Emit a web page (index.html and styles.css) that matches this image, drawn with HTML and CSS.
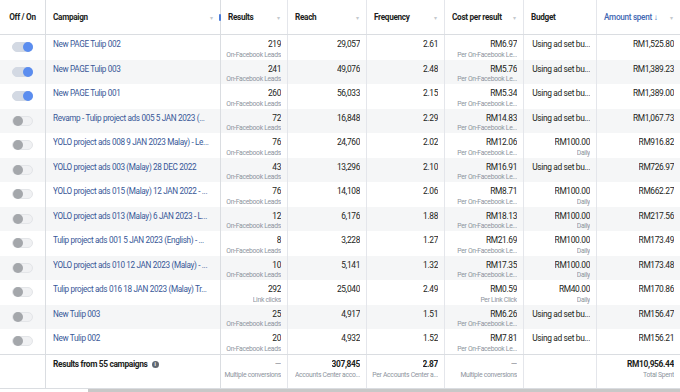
FILE: index.html
```html
<!DOCTYPE html>
<html>
<head>
<meta charset="utf-8">
<link rel="stylesheet" href="styles.css">
</head>
<body>
<div class="table">
  <div class="row head">
    <div class="cell c-toggle"><span class="htext">Off / On</span></div>
    <div class="cell c-name"><span class="htext">Campaign</span><span class="caret">▾</span><span class="handle"></span></div>
    <div class="cell frozen"><span class="htext">Results</span><span class="caret">▾</span></div>
    <div class="cell"><span class="htext">Reach</span><span class="caret">▾</span></div>
    <div class="cell"><span class="htext">Frequency</span><span class="caret">▾</span></div>
    <div class="cell"><span class="htext">Cost per result</span><span class="caret">▾</span></div>
    <div class="cell"><span class="htext">Budget</span></div>
    <div class="cell"><span class="htext blue">Amount spent ↓</span><span class="caret">▾</span></div>
  </div>

  <div class="row">
    <div class="cell c-toggle"><span class="tog on"></span></div>
    <div class="cell c-name"><a class="link">New PAGE Tulip 002</a></div>
    <div class="cell num frozen"><span class="v">219</span><span class="s">On-Facebook Leads</span></div>
    <div class="cell num"><span class="v">29,057</span></div>
    <div class="cell num"><span class="v">2.61</span></div>
    <div class="cell num"><span class="v">RM6.97</span><span class="s">Per On-Facebook Le...</span></div>
    <div class="cell num"><span class="v">Using ad set bu...</span></div>
    <div class="cell num"><span class="v">RM1,525.80</span></div>
  </div>
  <div class="row">
    <div class="cell c-toggle"><span class="tog on"></span></div>
    <div class="cell c-name"><a class="link">New PAGE Tulip 003</a></div>
    <div class="cell num frozen"><span class="v">241</span><span class="s">On-Facebook Leads</span></div>
    <div class="cell num"><span class="v">49,076</span></div>
    <div class="cell num"><span class="v">2.48</span></div>
    <div class="cell num"><span class="v">RM5.76</span><span class="s">Per On-Facebook Le...</span></div>
    <div class="cell num"><span class="v">Using ad set bu...</span></div>
    <div class="cell num"><span class="v">RM1,389.23</span></div>
  </div>
  <div class="row">
    <div class="cell c-toggle"><span class="tog on"></span></div>
    <div class="cell c-name"><a class="link">New PAGE Tulip 001</a></div>
    <div class="cell num frozen"><span class="v">260</span><span class="s">On-Facebook Leads</span></div>
    <div class="cell num"><span class="v">56,033</span></div>
    <div class="cell num"><span class="v">2.15</span></div>
    <div class="cell num"><span class="v">RM5.34</span><span class="s">Per On-Facebook Le...</span></div>
    <div class="cell num"><span class="v">Using ad set bu...</span></div>
    <div class="cell num"><span class="v">RM1,389.00</span></div>
  </div>
  <div class="row">
    <div class="cell c-toggle"><span class="tog"></span></div>
    <div class="cell c-name"><a class="link">Revamp - Tulip project ads 005 5 JAN 2023 (...</a></div>
    <div class="cell num frozen"><span class="v">72</span><span class="s">On-Facebook Leads</span></div>
    <div class="cell num"><span class="v">16,848</span></div>
    <div class="cell num"><span class="v">2.29</span></div>
    <div class="cell num"><span class="v">RM14.83</span><span class="s">Per On-Facebook Le...</span></div>
    <div class="cell num"><span class="v">Using ad set bu...</span></div>
    <div class="cell num"><span class="v">RM1,067.73</span></div>
  </div>
  <div class="row">
    <div class="cell c-toggle"><span class="tog"></span></div>
    <div class="cell c-name"><a class="link">YOLO project ads 008 9 JAN 2023 Malay) - Le...</a></div>
    <div class="cell num frozen"><span class="v">76</span><span class="s">On-Facebook Leads</span></div>
    <div class="cell num"><span class="v">24,760</span></div>
    <div class="cell num"><span class="v">2.02</span></div>
    <div class="cell num"><span class="v">RM12.06</span><span class="s">Per On-Facebook Le...</span></div>
    <div class="cell num"><span class="v">RM100.00</span><span class="s">Daily</span></div>
    <div class="cell num"><span class="v">RM916.82</span></div>
  </div>
  <div class="row">
    <div class="cell c-toggle"><span class="tog"></span></div>
    <div class="cell c-name"><a class="link">YOLO project ads 003 (Malay) 28 DEC 2022</a></div>
    <div class="cell num frozen"><span class="v">43</span><span class="s">On-Facebook Leads</span></div>
    <div class="cell num"><span class="v">13,296</span></div>
    <div class="cell num"><span class="v">2.10</span></div>
    <div class="cell num"><span class="v">RM16.91</span><span class="s">Per On-Facebook Le...</span></div>
    <div class="cell num"><span class="v">Using ad set bu...</span></div>
    <div class="cell num"><span class="v">RM726.97</span></div>
  </div>
  <div class="row">
    <div class="cell c-toggle"><span class="tog"></span></div>
    <div class="cell c-name"><a class="link">YOLO project ads 015 (Malay) 12 JAN 2022 - ...</a></div>
    <div class="cell num frozen"><span class="v">76</span><span class="s">On-Facebook Leads</span></div>
    <div class="cell num"><span class="v">14,108</span></div>
    <div class="cell num"><span class="v">2.06</span></div>
    <div class="cell num"><span class="v">RM8.71</span><span class="s">Per On-Facebook Le...</span></div>
    <div class="cell num"><span class="v">RM100.00</span><span class="s">Daily</span></div>
    <div class="cell num"><span class="v">RM662.27</span></div>
  </div>
  <div class="row">
    <div class="cell c-toggle"><span class="tog"></span></div>
    <div class="cell c-name"><a class="link">YOLO project ads 013 (Malay) 6 JAN 2023 - L...</a></div>
    <div class="cell num frozen"><span class="v">12</span><span class="s">On-Facebook Leads</span></div>
    <div class="cell num"><span class="v">6,176</span></div>
    <div class="cell num"><span class="v">1.88</span></div>
    <div class="cell num"><span class="v">RM18.13</span><span class="s">Per On-Facebook Le...</span></div>
    <div class="cell num"><span class="v">RM100.00</span><span class="s">Daily</span></div>
    <div class="cell num"><span class="v">RM217.56</span></div>
  </div>
  <div class="row">
    <div class="cell c-toggle"><span class="tog"></span></div>
    <div class="cell c-name"><a class="link">Tulip project ads 001 5 JAN 2023 (English) - ...</a></div>
    <div class="cell num frozen"><span class="v">8</span><span class="s">On-Facebook Leads</span></div>
    <div class="cell num"><span class="v">3,228</span></div>
    <div class="cell num"><span class="v">1.27</span></div>
    <div class="cell num"><span class="v">RM21.69</span><span class="s">Per On-Facebook Le...</span></div>
    <div class="cell num"><span class="v">RM100.00</span><span class="s">Daily</span></div>
    <div class="cell num"><span class="v">RM173.49</span></div>
  </div>
  <div class="row">
    <div class="cell c-toggle"><span class="tog"></span></div>
    <div class="cell c-name"><a class="link">YOLO project ads 010 12 JAN 2023 (Malay) - ...</a></div>
    <div class="cell num frozen"><span class="v">10</span><span class="s">On-Facebook Leads</span></div>
    <div class="cell num"><span class="v">5,141</span></div>
    <div class="cell num"><span class="v">1.32</span></div>
    <div class="cell num"><span class="v">RM17.35</span><span class="s">Per On-Facebook Le...</span></div>
    <div class="cell num"><span class="v">RM100.00</span><span class="s">Daily</span></div>
    <div class="cell num"><span class="v">RM173.48</span></div>
  </div>
  <div class="row">
    <div class="cell c-toggle"><span class="tog"></span></div>
    <div class="cell c-name"><a class="link">Tulip project ads 016 18 JAN 2023 (Malay) Tr...</a></div>
    <div class="cell num frozen"><span class="v">292</span><span class="s">Link clicks</span></div>
    <div class="cell num"><span class="v">25,040</span></div>
    <div class="cell num"><span class="v">2.49</span></div>
    <div class="cell num"><span class="v">RM0.59</span><span class="s">Per Link Click</span></div>
    <div class="cell num"><span class="v">RM40.00</span><span class="s">Daily</span></div>
    <div class="cell num"><span class="v">RM170.86</span></div>
  </div>
  <div class="row">
    <div class="cell c-toggle"><span class="tog"></span></div>
    <div class="cell c-name"><a class="link">New Tulip 003</a></div>
    <div class="cell num frozen"><span class="v">25</span><span class="s">On-Facebook Leads</span></div>
    <div class="cell num"><span class="v">4,917</span></div>
    <div class="cell num"><span class="v">1.51</span></div>
    <div class="cell num"><span class="v">RM6.26</span><span class="s">Per On-Facebook Le...</span></div>
    <div class="cell num"><span class="v">Using ad set bu...</span></div>
    <div class="cell num"><span class="v">RM156.47</span></div>
  </div>
  <div class="row">
    <div class="cell c-toggle"><span class="tog"></span></div>
    <div class="cell c-name"><a class="link">New Tulip 002</a></div>
    <div class="cell num frozen"><span class="v">20</span><span class="s">On-Facebook Leads</span></div>
    <div class="cell num"><span class="v">4,932</span></div>
    <div class="cell num"><span class="v">1.52</span></div>
    <div class="cell num"><span class="v">RM7.81</span><span class="s">Per On-Facebook Le...</span></div>
    <div class="cell num"><span class="v">Using ad set bu...</span></div>
    <div class="cell num"><span class="v">RM156.21</span></div>
  </div>

  <div class="row foot">
    <div class="cell c-toggle"></div>
    <div class="cell c-name"><span class="bold">Results from 55 campaigns</span><span class="info">i</span></div>
    <div class="cell num frozen"><span class="v dash">—</span><span class="s">Multiple conversions</span></div>
    <div class="cell num"><span class="v bold">307,845</span><span class="s">Accounts Center acco...</span></div>
    <div class="cell num"><span class="v bold">2.87</span><span class="s">Per Accounts Center a...</span></div>
    <div class="cell num"><span class="v dash">—</span><span class="s">Multiple conversions</span></div>
    <div class="cell num"></div>
    <div class="cell num"><span class="v bold">RM10,956.44</span><span class="s">Total Spent</span></div>
  </div>
  <div class="scroll"><div class="thumb"></div></div>
</div>
</body>
</html>
```

FILE: styles.css
```css
* { box-sizing: border-box; }
html, body { margin: 0; padding: 0; background: #fff; }
body {
  width: 680px;
  height: 392px;
  overflow: hidden;
  font-family: Roboto, "Liberation Sans", Arial, sans-serif;
  color: #1c1e21;
  font-size: 8.4px;
  letter-spacing: -0.35px;
}
.table { width: 680px; }
.row {
  display: grid;
  grid-template-columns: 46px 174px 68px 79px 78px 79px 73px 83px;
  height: 24.5px;
}
.row:nth-child(odd) { background: #f5f6f7; }
.row.head {
  height: 35px;
  background: #fff;
  border-bottom: 1px solid #dadde1;
}
.row.foot {
  height: 35px;
  background: #fff;
  border-top: 1px solid #dadde1;
  border-bottom: 1px solid #dadde1;
}
.cell {
  position: relative;
  border-right: 1px solid #e4e6eb;
  padding: 3px 4px 0 7px;
  display: flex;
  flex-direction: column;
  overflow: hidden;
  min-width: 0;
}
.cell:last-child { border-right: none; }
.c-toggle { align-items: center; justify-content: center; padding: 0; border-right-color: #dadde1; }
.head .cell {
  flex-direction: row;
  align-items: center;
  justify-content: space-between;
  padding: 0 7px 0 7px;
  overflow: visible;
}
.head .c-toggle { justify-content: center; padding: 0; }
.htext { font-weight: 700; font-size: 8.2px; letter-spacing: -0.3px; color: #1c1e21; white-space: nowrap; }
.htext.blue { color: #4267b2; font-weight: 500; }
.caret { color: #c4c8cd; font-size: 6px; }
.handle {
  position: absolute;
  right: -1px;
  top: 14px;
  width: 2px;
  height: 7px;
  background: #4a7bd8;
  border-radius: 1px;
  z-index: 2;
}
.frozen { border-left: 1px solid #dadde1; }
.c-name { border-right: none; padding-right: 2px; }
.num { align-items: flex-end; text-align: right; padding-left: 2px; padding-right: 6px; }
.v {
  line-height: 11px;
  margin-top: 1px;
  white-space: nowrap;
  overflow: hidden;
  text-overflow: ellipsis;
  max-width: 100%;
}
.dash { color: #90949c; }
.s {
  font-size: 6.8px;
  letter-spacing: -0.3px;
  line-height: 10px;
  color: #8d949e;
  white-space: nowrap;
  overflow: hidden;
  text-overflow: ellipsis;
  max-width: 100%;
}
.link {
  color: #385898;
  font-size: 8.2px;
  line-height: 11px;
  margin-top: 1px;
  white-space: nowrap;
  overflow: hidden;
  text-overflow: ellipsis;
}
.bold { font-weight: 700; }
.foot .c-name { flex-direction: row; align-items: flex-start; }
.foot .c-name .bold { line-height: 11px; margin-top: 1px; }
.info {
  display: inline-block;
  width: 7px;
  height: 7px;
  border-radius: 50%;
  background: #606770;
  color: #fff;
  font-size: 5px;
  font-weight: 700;
  line-height: 7px;
  text-align: center;
  letter-spacing: 0;
  margin: 3px 0 0 4px;
}
.tog {
  position: relative;
  width: 21px;
  height: 10px;
  border-radius: 5px;
  background: #f0f1f3;
  border: 1px solid #e3e5e8;
}
.tog::after {
  content: "";
  position: absolute;
  left: 0px;
  top: -1px;
  width: 10px;
  height: 10px;
  border-radius: 50%;
  background: #a4a7ab;
}
.tog.on { background: #d3d9e3; border-color: #d3d9e3; }
.tog.on::after { left: auto; right: -1px; background: #5b8def; }
.scroll { height: 4px; padding-left: 88px; }
.thumb { height: 4px; background: #c8c8c8; }
```
